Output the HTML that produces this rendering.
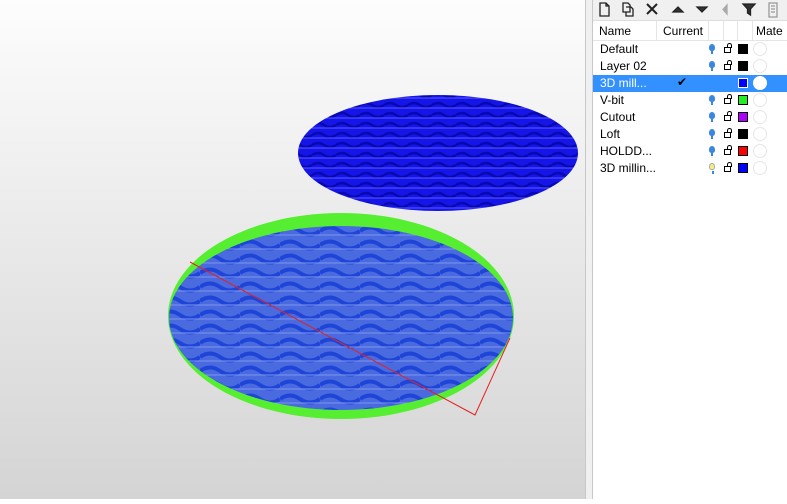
<!DOCTYPE html>
<html><head><style>
body{margin:0;width:787px;height:499px;overflow:hidden;font-family:"Liberation Sans",sans-serif;position:relative;background:#fff}
#vp{position:absolute;left:0;top:0;width:585px;height:499px;background:linear-gradient(#fdfdfd,#d4d4d4)}
#sep{position:absolute;left:585px;top:0;width:8px;height:499px;background:#f0f0f0;border-left:1px solid #c8c8c8;border-right:1px solid #c8c8c8;box-sizing:border-box}
#panel{position:absolute;left:593px;top:0;width:194px;height:499px;background:#fff}
#tb{height:20px;background:#f0f0f0;border-bottom:1px solid #ddd;position:relative}
#hdr{position:absolute;top:21px;left:0;width:194px;height:19px;border-bottom:1px solid #e5e5e5;font-size:12px;color:#000}
#hdr span{position:absolute;top:3px}
.vl{position:absolute;top:0;height:19px;border-left:1px solid #e5e5e5}
.row{position:absolute;left:0;width:194px;height:17px;font-size:12px}
.row .n{position:absolute;left:7px;top:1px}
.sel{background:#3390ff;color:#fff}
.bulb{position:absolute;left:116px;top:3px;width:6px;height:7px;border-radius:50% 50% 40% 40%;background:#3a86e0}
.bulb:after{content:"";position:absolute;left:2px;top:7px;width:2px;height:3px;background:#3a86e0}
.lock{position:absolute;left:131px;top:6px;width:7px;height:6px;border:1px solid #000;box-sizing:border-box}
.lock:before{content:"";position:absolute;left:2px;top:-5px;width:5px;height:5px;border:1px solid #000;border-bottom:none;border-radius:3px 3px 0 0;box-sizing:border-box}
.sw{position:absolute;left:145px;top:3px;width:10px;height:10px;border:1px solid #000;box-sizing:border-box}
.mat{position:absolute;left:160px;top:1px;width:14px;height:14px;border-radius:50%;border:1px solid #e6e6e6;box-sizing:border-box;background:#fff}
</style></head><body>
<div id="vp">
<svg width="585" height="499">
<defs>
<pattern id="p1" width="24" height="10" patternUnits="userSpaceOnUse"><rect width="24" height="10" fill="#1515e8"/><path d="M0 5 Q6 1 12 5 T24 5" stroke="#0808b0" stroke-width="2.5" fill="none"/><path d="M0 8h24" stroke="#5a5aff" stroke-width="1"/></pattern>
<pattern id="p2" width="40" height="14" patternUnits="userSpaceOnUse"><rect width="40" height="14" fill="#4a6ae0"/><path d="M0 7 Q10 0 20 7 T40 7" stroke="#1f45d8" stroke-width="4" fill="none"/><path d="M0 11h40" stroke="#7f96ee" stroke-width="1"/></pattern>
</defs>
<ellipse cx="438" cy="153" rx="140" ry="58" fill="url(#p1)"/>
<ellipse cx="341" cy="316" rx="173" ry="103" fill="#55ee30"/>
<ellipse cx="341" cy="318" rx="172" ry="92" fill="url(#p2)"/>
<path d="M190 262 L475 415 L510 338" stroke="#e82020" stroke-width="1" fill="none"/>
</svg>
</div>
<div id="sep"></div>
<div id="panel">
<div id="tb">
<svg width="194" height="20" fill="none" stroke="#222" stroke-width="1.3">
<path d="M7 3h6l3 3v10H7z M13 3v3h3"/>
<path d="M30 3h5l2 2v7h-7z M33 7h5l2 2v7h-7v-4"/>
<path d="M54 4l10 10M64 4L54 14" stroke-width="2"/>
<path d="M80 12l5-5 5 5z" fill="#333"/>
<path d="M104 7l5 5 5-5z" fill="#333"/>
<path d="M134 5v9l-4-4.5z" fill="#aaa" stroke="#aaa"/>
<path d="M150 4h12l-4.5 5v6l-3-2V9z" fill="#333"/>
<path d="M176 3h8v14h-8z M178 6h4M178 9h4M178 12h4" stroke="#999"/>
</svg></div>
<div id="hdr"><span style="left:6px">Name</span><span style="left:70px">Current</span><span style="left:163px">Mate</span>
<div class="vl" style="left:63px"></div><div class="vl" style="left:115px"></div><div class="vl" style="left:130px"></div><div class="vl" style="left:144px"></div><div class="vl" style="left:159px"></div></div>
<div class="row" style="top:41px"><span class="n">Default</span><i class="bulb"></i><i class="lock"></i><i class="sw" style="background:#000"></i><i class="mat"></i></div>
<div class="row" style="top:58px"><span class="n">Layer 02</span><i class="bulb"></i><i class="lock"></i><i class="sw" style="background:#000"></i><i class="mat"></i></div>
<div class="row sel" style="top:75px"><span class="n">3D mill...</span><span style="position:absolute;left:84px;top:0;color:#000">✔</span><i class="sw" style="background:#0000ff;border-color:#fff"></i><i class="mat" style="border-color:#fff"></i></div>
<div class="row" style="top:92px"><span class="n">V-bit</span><i class="bulb"></i><i class="lock"></i><i class="sw" style="background:#22ee22"></i><i class="mat"></i></div>
<div class="row" style="top:109px"><span class="n">Cutout</span><i class="bulb"></i><i class="lock"></i><i class="sw" style="background:#b000ff"></i><i class="mat"></i></div>
<div class="row" style="top:126px"><span class="n">Loft</span><i class="bulb"></i><i class="lock"></i><i class="sw" style="background:#000"></i><i class="mat"></i></div>
<div class="row" style="top:143px"><span class="n">HOLDD...</span><i class="bulb"></i><i class="lock"></i><i class="sw" style="background:#ff0000"></i><i class="mat"></i></div>
<div class="row" style="top:160px"><span class="n">3D millin...</span><i class="bulb" style="background:#f0f080;border:1px solid #aaa;box-sizing:border-box"></i><i class="lock"></i><i class="sw" style="background:#0000ff"></i><i class="mat"></i></div>
</div>
</body></html>
